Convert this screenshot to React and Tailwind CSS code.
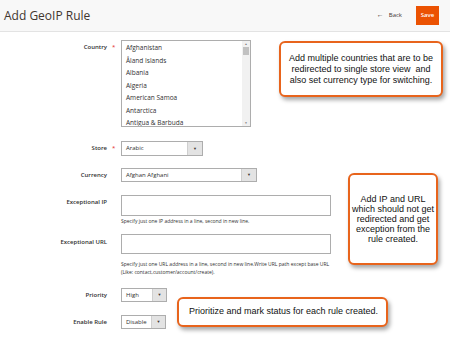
const countries = [
  "Afghanistan",
  "Åland Islands",
  "Albania",
  "Algeria",
  "American Samoa",
  "Antarctica",
  "Antigua & Barbuda",
];

function Label({ text, required }) {
  return (
    <div className="flex w-[121px] shrink-0 items-center justify-end pr-[6px] leading-[9px]">
      <span className="text-[6px] font-semibold text-[#303030]">{text}</span>
      <span className={"ml-[5px] w-[3px] text-[6px] " + (required ? "text-[#e22626]" : "text-transparent")}>*</span>
    </div>
  );
}

function Select({ value, width, arrow, h = "h-[15px]" }) {
  return (
    <div className={"flex border border-[#adadad] bg-white " + width + " " + h}>
      <div className="flex flex-1 items-center pl-[4px] text-[6px] text-[#303030]">{value}</div>
      <div className={"flex items-center justify-center border-l border-[#cfcfcf] bg-[#e3e3e3] " + arrow}>
        <span className="text-[4px] text-[#41362f]">▼</span>
      </div>
    </div>
  );
}

function Callout({ className, children }) {
  return (
    <div
      className={
        "absolute flex items-center justify-center whitespace-nowrap rounded-[6px] border-2 border-[#e8641c] bg-white text-center font-['Liberation_Sans',Arial,sans-serif] text-[9px] text-[#111] shadow-[2px_3px_4px_rgba(0,0,0,0.35)] " +
        className
      }
    >
      {children}
    </div>
  );
}

export default function App() {
  return (
    <div className="relative h-[343px] w-[450px] overflow-hidden bg-white font-['Open_Sans',sans-serif]">
      <header className="flex h-[32px] items-center justify-between border-b border-[#e3e3e3] bg-[#f8f8f8] pl-[4px] pr-[11px]">
        <h1 className="text-[12px] text-[#41362f]">Add GeoIP Rule</h1>
        <div className="flex items-center gap-[14px]">
          <span className="flex items-center gap-[5px] text-[6px] text-[#41362f]">
            <span className="text-[7px]">←</span>Back
          </span>
          <button className="h-[19px] w-[23px] bg-[#eb5202] text-[6px] font-semibold text-white">Save</button>
        </div>
      </header>

      <div className="pt-[8px]">
        <div className="flex">
          <div className="pt-[3px]">
            <Label text="Country" required />
          </div>
          <div className="flex h-[87px] w-[130px] border border-[#adadad] bg-white">
            <ul className="flex-1 overflow-hidden pl-[4px] pt-[1px] text-[6.5px] leading-[12.5px] text-[#303030]">
              {countries.map((c) => (
                <li key={c}>{c}</li>
              ))}
            </ul>
            <div className="flex w-[8px] flex-col items-center bg-[#f1f1f1] py-[1px]">
              <span className="text-[3px] leading-[4px] text-[#777]">▲</span>
              <div className="mt-[1px] h-[8px] w-[6px] bg-[#c1c1c1]" />
              <span className="mt-auto text-[3px] leading-[4px] text-[#777]">▼</span>
            </div>
          </div>
        </div>

        <div className="mt-[14px] flex items-center">
          <Label text="Store" required />
          <Select value="Arabic" width="w-[82px]" arrow="w-[15px]" />
        </div>

        <div className="mt-[12px] flex items-center">
          <Label text="Currency" />
          <Select value="Afghan Afghani" width="w-[136px]" arrow="w-[15px]" h="h-[14px]" />
        </div>

        <div className="mt-[13px] flex">
          <div className="pt-[3px]">
            <Label text="Exceptional IP" />
          </div>
          <div>
            <div className="h-[21px] w-[210px] border border-[#adadad] bg-white" />
            <p className="mt-[2px] text-[5px] leading-[7px] text-[#303030]">
              Specify just one IP address in a line, second in new line.
            </p>
          </div>
        </div>

        <div className="mt-[9px] flex">
          <div className="pt-[4px]">
            <Label text="Exceptional URL" />
          </div>
          <div>
            <div className="h-[20px] w-[210px] border border-[#adadad] bg-white" />
            <p className="mt-[6px] w-[215px] text-[5px] leading-[8px] text-[#303030]">
              Specify just one URL address in a line, second in new line.Write URL path except base URL (Like: contact,customer/account/create).
            </p>
          </div>
        </div>

        <div className="mt-[12px] flex items-center">
          <Label text="Priority" />
          <Select value="High" width="w-[46px]" arrow="w-[14px]" h="h-[14px]" />
        </div>

        <div className="mt-[13px] flex items-center">
          <Label text="Enable Rule" />
          <Select value="Disable" width="w-[45px]" arrow="w-[14px]" h="h-[14px]" />
        </div>
      </div>

      <Callout className="left-[279px] top-[41px] h-[56px] w-[164px] leading-[11px]">
        <p>
          Add multiple countries that are to be
          <br />
          redirected to single store view&nbsp; and
          <br />
          also set currency type for switching.
        </p>
      </Callout>

      <Callout className="left-[348px] top-[173px] h-[92px] w-[90px] leading-[10px]">
        <p>
          Add IP and URL
          <br />
          which should not get
          <br />
          redirected and get
          <br />
          exception from the
          <br />
          rule created.
        </p>
      </Callout>

      <Callout className="left-[177px] top-[297px] h-[30px] w-[211px] justify-start pl-[10px]">
        <p>Prioritize and mark status for each rule created.</p>
      </Callout>
    </div>
  );
}
